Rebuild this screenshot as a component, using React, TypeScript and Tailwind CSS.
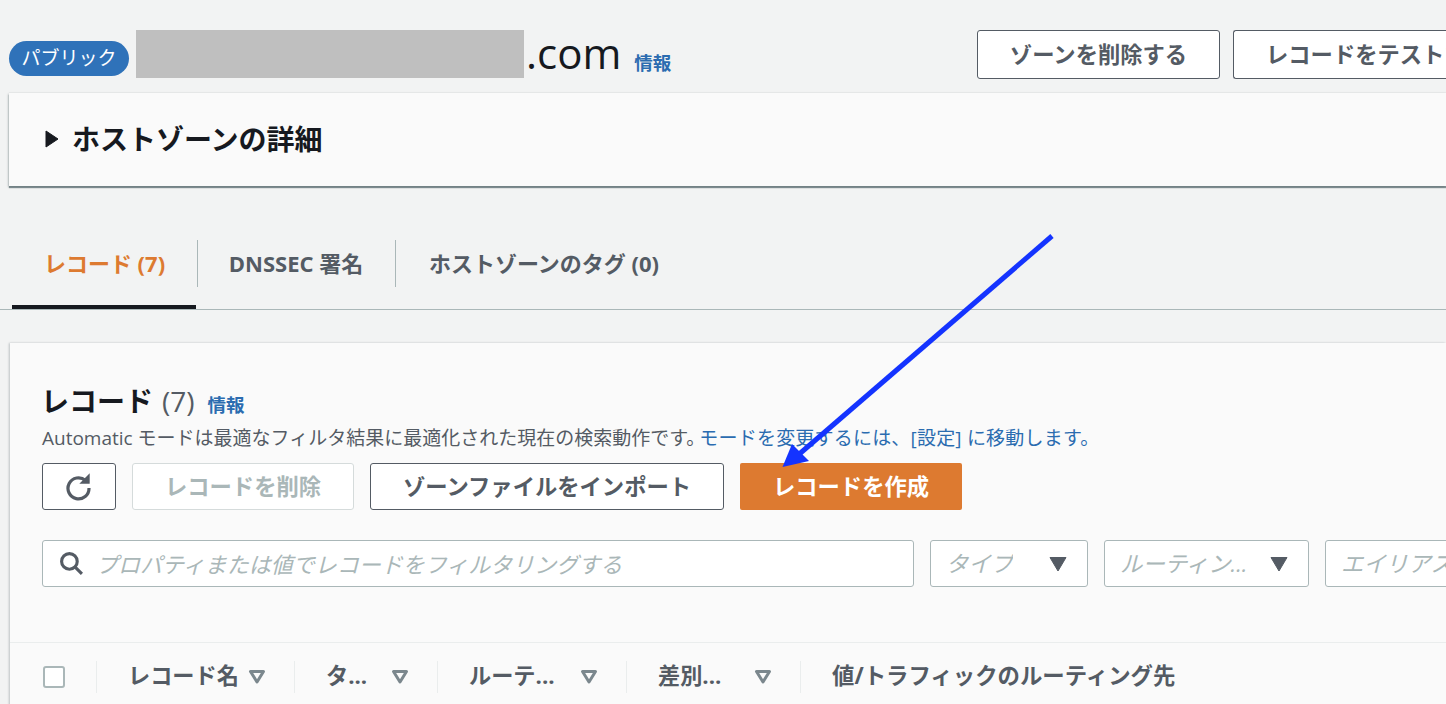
import React from "react";

const font = "font-['Open_Sans','Noto_Sans_CJK_JP',sans-serif]";

const InfoLink = () => (
  <span className="text-[18.5px] font-bold leading-none text-[#2b6cb0]">情報</span>
);

const Caret = ({ className }: { className: string }) => (
  <svg viewBox="0 0 18 16" className={className}>
    <path d="M1 1.5h16L9 15z" fill="currentColor" stroke="currentColor" strokeLinejoin="round" />
  </svg>
);

const SortIcon = () => (
  <svg viewBox="0 0 18 16" className="h-[16px] w-[18px] text-[#7b878d]">
    <path d="M2.5 2.5h13L9 13z" fill="none" stroke="currentColor" strokeWidth="3" strokeLinejoin="round" />
  </svg>
);

const Tab = ({ label, active, width, divider }: { label: string; active?: boolean; width: string; divider?: boolean }) => (
  <div className={`relative flex h-[47px] items-center justify-center ${width} ${divider ? "border-r border-[#aab7b8]" : ""}`}>
    <span className={`text-[22px] font-bold ${active ? "text-[#dd7a30]" : "text-[#545b64]"}`}>{label}</span>
  </div>
);

const Dropdown = ({ label, width }: { label: string; width: string }) => (
  <div className={`flex h-[47px] shrink-0 items-center justify-between rounded-[3px] border border-[#aab7b8] bg-white pl-[15px] pr-[20px] ${width}`}>
    <span className="truncate text-[22.4px] italic leading-[30px] text-[#aab7b8]">{label}</span>
    <Caret className="ml-[8px] h-[16px] w-[18px] shrink-0 text-[#545b64]" />
  </div>
);

const Column = ({ label, width }: { label: string; width: string }) => (
  <div className={`flex h-[32px] shrink-0 items-center justify-between border-r border-[#eaeded] pl-[33px] pr-[28px] ${width}`}>
    <span className="-ml-[2px] whitespace-nowrap text-[22.2px] font-bold leading-none text-[#545b64]">{label}</span>
    <SortIcon />
  </div>
);

export default function App() {
  return (
    <div className={`h-[704px] w-[1446px] overflow-hidden bg-[#f2f3f3] ${font} relative`}>
      {/* page header */}
      <div className="flex h-[93px] pl-[9px] pt-[30px]">
        <span className="mt-[11px] flex h-[35px] w-[120px] shrink-0 items-center justify-center rounded-full bg-[#2f72b9] text-[19px] text-white">
          パブリック
        </span>
        <div className="ml-[7px] h-[48px] w-[388px] shrink-0 bg-[#bfbfbf]" />
        <span className="ml-[2px] mt-[-2px] text-[42px] font-medium leading-[50px] text-[#16191f]">.com</span>
        <span className="ml-[13px] mt-[22px]">
          <InfoLink />
        </span>
        <div className="ml-auto flex shrink-0 gap-[13px]">
          <button className="h-[49px] w-[243px] rounded-[3px] border border-[#545b64] bg-white text-[22.3px] font-bold text-[#545b64]">
            ゾーンを削除する
          </button>
          <button className="h-[49px] w-[213px] overflow-hidden whitespace-nowrap rounded-l-[3px] border border-r-0 border-[#545b64] bg-white pl-[32px] text-left text-[22.3px] font-bold text-[#545b64]">
            レコードをテストする
          </button>
        </div>
      </div>

      {/* hosted zone details */}
      <div className="ml-[9px] flex h-[93px] items-center gap-[13px] bg-[#fafafa] pb-[2px] pl-[36px] shadow-[0_2px_1px_0_rgba(0,28,36,0.45),-1px_1px_2px_0_rgba(0,28,36,0.2),0_-1px_1px_0_rgba(0,28,36,0.04)]">
        <svg viewBox="0 0 14 18" className="h-[18px] w-[14px] text-[#16191f]">
          <path d="M1 1l12 8-12 8z" fill="currentColor" stroke="currentColor" strokeLinejoin="round" />
        </svg>
        <h2 className="text-[28px] font-bold leading-none text-[#16191f]">ホストゾーンの詳細</h2>
      </div>

      {/* tabs */}
      <div className="mt-[54px] flex h-[70px] items-start border-b border-[#aab7b8] pl-[12px]">
        <div className="relative h-[69px] w-[184px] border-b-[4px] border-[#16191f]">
          <Tab label="レコード (7)" active width="w-[186px]" divider />
        </div>
        <Tab label="DNSSEC 署名" width="w-[199px] ml-[1px]" divider />
        <Tab label="ホストゾーンのタグ (0)" width="w-[296px]" />
      </div>

      {/* records */}
      <div className="ml-[10px] mt-[33px] h-[400px] bg-[#fafafa] shadow-[-1px_0_2px_0_rgba(0,28,36,0.22)]">
        <div className="pl-[32px] pt-[38px]">
          <div className="flex items-baseline">
            <h2 className="-ml-[1px] text-[28px] font-bold leading-[40px] text-[#16191f]">レコード</h2>
            <span className="ml-[9px] text-[28px] leading-[40px] text-[#545b64]">(7)</span>
            <span className="ml-[13px]">
              <InfoLink />
            </span>
          </div>
          <p className="mt-[4px] whitespace-nowrap text-[19px] leading-[26px] text-[#545b64]">
            Automatic モードは最適なフィルタ結果に最適化された現在の検索動作です。
            <span className="-ml-[6px] tracking-[0.2px] text-[#2b6cb0]">モードを変更するには、[設定] に移動します。</span>
          </p>
          <div className="mt-[12px] flex gap-[16px]">
            <button className="flex h-[47px] w-[74px] items-center justify-center rounded-[3px] border border-[#545b64] bg-white text-[#545b64]">
              <svg viewBox="0 0 28 28" className="h-[28px] w-[28px]" fill="none" stroke="currentColor" strokeWidth="3.2">
                <path d="M20.5 7.5A10.5 10.5 0 1 0 24 15" />
                <path d="M24 2v8h-8z" fill="currentColor" strokeWidth="1.4" />
              </svg>
            </button>
            <button className="h-[47px] w-[222px] rounded-[3px] border border-[#d5dbdb] bg-white text-[22.3px] font-bold text-[#aab7b8]">
              レコードを削除
            </button>
            <button className="h-[47px] w-[354px] rounded-[3px] border border-[#545b64] bg-white text-[22.3px] font-bold text-[#545b64]">
              ゾーンファイルをインポート
            </button>
            <button className="h-[47px] w-[222px] rounded-[2px] bg-[#dd7a30] text-[22.3px] font-bold text-white">
              レコードを作成
            </button>
          </div>
          <div className="mt-[30px] flex gap-[16px]">
            <div className="flex h-[47px] w-[872px] shrink-0 items-center gap-[12px] rounded-[3px] border border-[#aab7b8] bg-white pl-[16px]">
              <svg viewBox="0 0 24 24" className="h-[25px] w-[25px] text-[#545b64]" fill="none" stroke="currentColor" strokeWidth="3">
                <circle cx="10" cy="10" r="7.5" />
                <path d="M15.5 15.5L22 22" />
              </svg>
              <span className="text-[22px] italic leading-none text-[#aab7b8]">
                プロパティまたは値でレコードをフィルタリングする
              </span>
            </div>
            <Dropdown label="タイプ" width="w-[158px]" />
            <Dropdown label="ルーティン..." width="w-[205px]" />
            <Dropdown label="エイリアスレコード" width="w-[260px]" />
          </div>
        </div>
        <div className="mt-[55px] flex h-[68px] items-center border-t border-[#eaeded] pl-[33px]">
          <div className="h-[22px] w-[22px] shrink-0 rounded-[3px] border-2 border-[#aab7b8] bg-white" />
          <div className="ml-[31px] h-[32px] w-px shrink-0 bg-[#eaeded]" />
          <Column label="レコード名" width="w-[198px]" />
          <Column label="タ..." width="w-[143px]" />
          <Column label="ルーテ..." width="w-[189px]" />
          <Column label="差別..." width="w-[174px]" />
          <span className="ml-[31px] whitespace-nowrap text-[22.4px] font-bold leading-none text-[#545b64]">
            値/トラフィックのルーティング先
          </span>
        </div>
      </div>

      {/* annotation arrow */}
      <svg viewBox="0 0 1446 704" className="pointer-events-none absolute left-0 top-0 h-[704px] w-[1446px]">
        <path d="M1052 236L797 456" stroke="#1433ff" strokeWidth="5" fill="none" />
        <path d="M782.5 467L792 444L809 461z" fill="#1433ff" />
      </svg>
    </div>
  );
}
